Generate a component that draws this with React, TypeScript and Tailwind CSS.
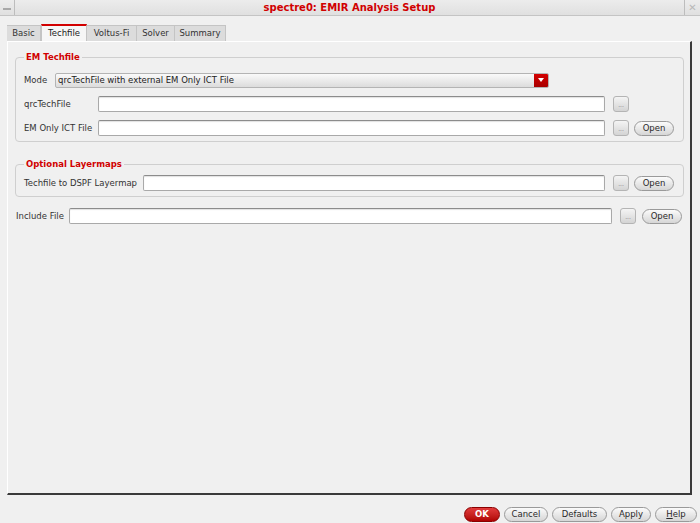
import React from 'react';

const font = { fontFamily: '"DejaVu Sans", "Noto Sans", sans-serif' };

const Input: React.FC<{ className?: string }> = ({ className = '' }) => (
  <div className={`h-[16px] bg-white border border-[#a9a9a9] border-t-[#8c8c8c] rounded-[2px] shadow-[inset_0_1px_1px_rgba(0,0,0,0.12)] ${className}`} />
);

const Browse: React.FC = () => (
  <button className="w-[16px] h-[16px] rounded-[3px] border border-[#b4b4b4] bg-gradient-to-b from-[#f4f4f4] to-[#d4d4d4] flex items-end justify-center pb-[3px] text-[6px] leading-none text-[#777]">
    ...
  </button>
);

const Pill: React.FC<{ label: string; w: string; red?: boolean }> = ({ label, w, red }) => (
  <button
    className={`${w} h-[15px] rounded-full border text-[8.5px] leading-none flex items-center justify-center ${
      red
        ? 'border-[#8a0000] bg-gradient-to-b from-[#e23a3a] to-[#b00000] text-white font-bold'
        : 'border-[#9a9a9a] bg-gradient-to-b from-[#fbfbfb] to-[#d6d6d6] text-[#2a2a2a]'
    }`}
  >
    {label}
  </button>
);

const Group: React.FC<{ title: string; children: React.ReactNode; className?: string }> = ({ title, children, className = '' }) => (
  <fieldset className={`border border-[#cfcfcf] rounded-[4px] px-[8px] ${className}`}>
    <legend className="px-[2px] text-[8.5px] font-bold text-[#d10000] leading-[11px]">{title}</legend>
    {children}
  </fieldset>
);

const tabs = [
  { name: 'Basic', w: 'w-[34px]' },
  { name: 'Techfile', w: 'w-[46px]' },
  { name: 'Voltus-Fi', w: 'w-[50px]' },
  { name: 'Solver', w: 'w-[38px]' },
  { name: 'Summary', w: 'w-[51px]' },
];

const App: React.FC = () => {
  return (
    <div className="w-[700px] h-[523px] bg-[#f0f0f0] flex flex-col text-[#333] text-[8.5px]" style={font}>
      {/* title bar */}
      <div className="h-[16px] flex border-b border-[#c4c4c4] bg-gradient-to-b from-[#ececec] to-[#e0e0e0]">
        <div className="w-[15px] border-r border-[#bdbdbd] flex items-center justify-center">
          <div className="w-[8px] h-[2px] bg-[#a8a8a8] mt-[3px]" />
        </div>
        <div className="flex-1 text-center text-[10px] font-bold text-[#d10000] leading-[16px]">spectre0: EMIR Analysis Setup</div>
        <div className="w-[16px] border-l border-[#bdbdbd] flex items-center justify-center text-[#b8b8b8] text-[10px] leading-none">✕</div>
      </div>

      {/* tabs */}
      <div className="flex ml-[7px] mt-[9px] h-[16px]">
        {tabs.map((t) => (
          <div
            key={t.name}
            className={`${t.w} flex items-center justify-center border-r border-[#c4c4c4] ${
              t.name === 'Techfile'
                ? 'bg-[#f6f6f6] border-t-2 border-t-[#d20000] border-l border-l-[#c4c4c4] text-[#222] -mt-[1px] h-[17px]'
                : 'bg-[#dcdcdc] border-t border-[#c4c4c4] text-[#333]'
            }`}
          >
            {t.name}
          </div>
        ))}
      </div>

      {/* panel */}
      <div className="ml-[7px] w-[685px] h-[454px] border-l border-t border-l-white border-t-white border-r-2 border-b-2 border-r-[#3a3a3a] border-b-[#3a3a3a] pl-[7px] pr-[6px] pt-[10px]">
        <Group title="EM Techfile" className="pt-[9px] pb-[5px]">
          <div className="flex flex-col gap-[8px]">
            <div className="flex items-center h-[16px]">
              <span className="w-[31px]">Mode</span>
              <div className="w-[494px] h-[15px] flex rounded-[2px] border border-[#b4b4b4] bg-gradient-to-b from-[#fafafa] to-[#dcdcdc] overflow-hidden">
                <span className="flex-1 pl-[2px] leading-[13px] text-[#222]">qrcTechFile with external EM Only ICT File</span>
                <span className="w-[14px] bg-gradient-to-b from-[#d40000] to-[#a80000] flex items-center justify-center">
                  <svg width="6" height="4" viewBox="0 0 6 4"><path d="M0 0h6L3 4z" fill="#fff" /></svg>
                </span>
              </div>
            </div>
            <div className="flex items-center h-[16px]">
              <span className="w-[74px]">qrcTechFile</span>
              <Input className="w-[507px]" />
              <div className="ml-[8px]"><Browse /></div>
            </div>
            <div className="flex items-center h-[16px]">
              <span className="w-[74px]">EM Only ICT File</span>
              <Input className="w-[507px]" />
              <div className="ml-[8px]"><Browse /></div>
              <div className="ml-[5px]"><Pill label="Open" w="w-[40px]" /></div>
            </div>
          </div>
        </Group>

        <Group title="Optional Layermaps" className="mt-[17px] pt-[5px] pb-[5px]">
          <div className="flex items-center h-[16px]">
            <span className="w-[119px]">Techfile to DSPF Layermap</span>
            <Input className="w-[462px]" />
            <div className="ml-[8px]"><Browse /></div>
            <div className="ml-[5px]"><Pill label="Open" w="w-[40px]" /></div>
          </div>
        </Group>

        <div className="flex items-center h-[16px] mt-[11px] -ml-[7px] pl-[8px]">
          <span className="w-[53px]">Include File</span>
          <Input className="w-[543px]" />
          <div className="ml-[8px]"><Browse /></div>
          <div className="ml-[6px]"><Pill label="Open" w="w-[40px]" /></div>
        </div>
      </div>

      {/* bottom buttons */}
      <div className="flex justify-end gap-[4px] pr-[3px] mt-[12px]">
        <Pill label="OK" w="w-[36px]" red />
        <Pill label="Cancel" w="w-[44px]" />
        <Pill label="Defaults" w="w-[55px]" />
        <Pill label="Apply" w="w-[40px]" />
        <button className="w-[42px] h-[15px] rounded-full border border-[#9a9a9a] bg-gradient-to-b from-[#fbfbfb] to-[#d6d6d6] text-[8.5px] leading-none text-[#2a2a2a]">
          <span className="underline">H</span>elp
        </button>
      </div>
    </div>
  );
};

export default App;
